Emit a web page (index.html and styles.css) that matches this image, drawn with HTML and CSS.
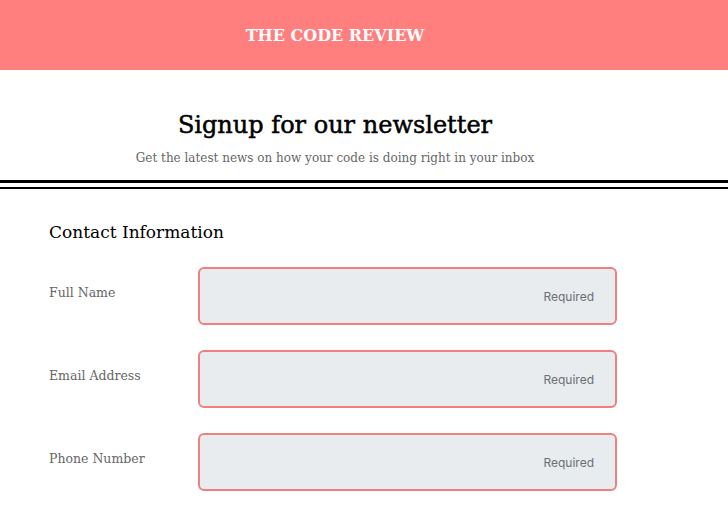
FILE: index.html
```html
<!DOCTYPE html>
<html lang="en">
<head>
<meta charset="utf-8">
<title>The Code Review</title>
<link rel="stylesheet" href="styles.css">
</head>
<body>
<header class="topbar">
  <div class="inner"><span class="brand">THE CODE REVIEW</span></div>
</header>
<section class="hero">
  <div class="inner">
    <h1 class="title">Signup for our newsletter</h1>
    <p class="subtitle">Get the latest news on how your code is doing right in your inbox</p>
  </div>
</section>
<div class="rule-thick"></div>
<div class="rule-thin"></div>
<form class="form">
  <h2 class="section-title">Contact Information</h2>
  <div class="row">
    <label class="label" for="name">Full Name</label>
    <input class="field" id="name" type="text" placeholder="Required">
  </div>
  <div class="row">
    <label class="label" for="email">Email Address</label>
    <input class="field" id="email" type="email" placeholder="Required">
  </div>
  <div class="row">
    <label class="label" for="phone">Phone Number</label>
    <input class="field" id="phone" type="tel" placeholder="Required">
  </div>
</form>
</body>
</html>
```
FILE: styles.css
```css
* { box-sizing: border-box; }
body {
  margin: 0;
  font-family: "DejaVu Serif", "Liberation Serif", serif;
  background: #fff;
  color: #111;
}
.inner {
  width: 670px;
  text-align: center;
}
.topbar {
  background: #ff7f7f;
  height: 70px;
  display: flex;
  align-items: center;
}
.brand {
  color: #fff;
  font-size: 16px;
  font-weight: 700;
}
.hero {
  padding: 40px 0 0;
  height: 110px;
}
.title {
  margin: 0;
  font-size: 24px;
  font-weight: 400;
  line-height: 30px;
  color: #000;
  -webkit-text-stroke: 0.5px #000;
}
.subtitle {
  margin: 10px 0 0;
  font-size: 12px;
  color: #666;
  line-height: 16px;
}
.rule-thick {
  height: 3px;
  background: #000;
}
.rule-thin {
  height: 2px;
  background: #000;
  margin-top: 4px;
}
.form {
  padding: 32px 0 0 49px;
}
.section-title {
  margin: 0 0 24px;
  font-size: 17px;
  font-weight: 400;
  line-height: 22px;
  color: #000;
}
.row {
  display: flex;
  align-items: flex-start;
  margin-bottom: 25px;
}
.label {
  width: 149px;
  font-size: 12.5px;
  color: #666;
  padding-top: 18px;
}
.field {
  width: 419px;
  height: 58px;
  border: 2px solid #f08080;
  border-radius: 6px;
  background: #e8ecef;
  text-align: right;
  padding: 0 21px;
  font-family: Inter, "Noto Sans", sans-serif;
  font-size: 12px;
  outline: none;
}
.field::placeholder {
  color: #6b6f73;
}
```
